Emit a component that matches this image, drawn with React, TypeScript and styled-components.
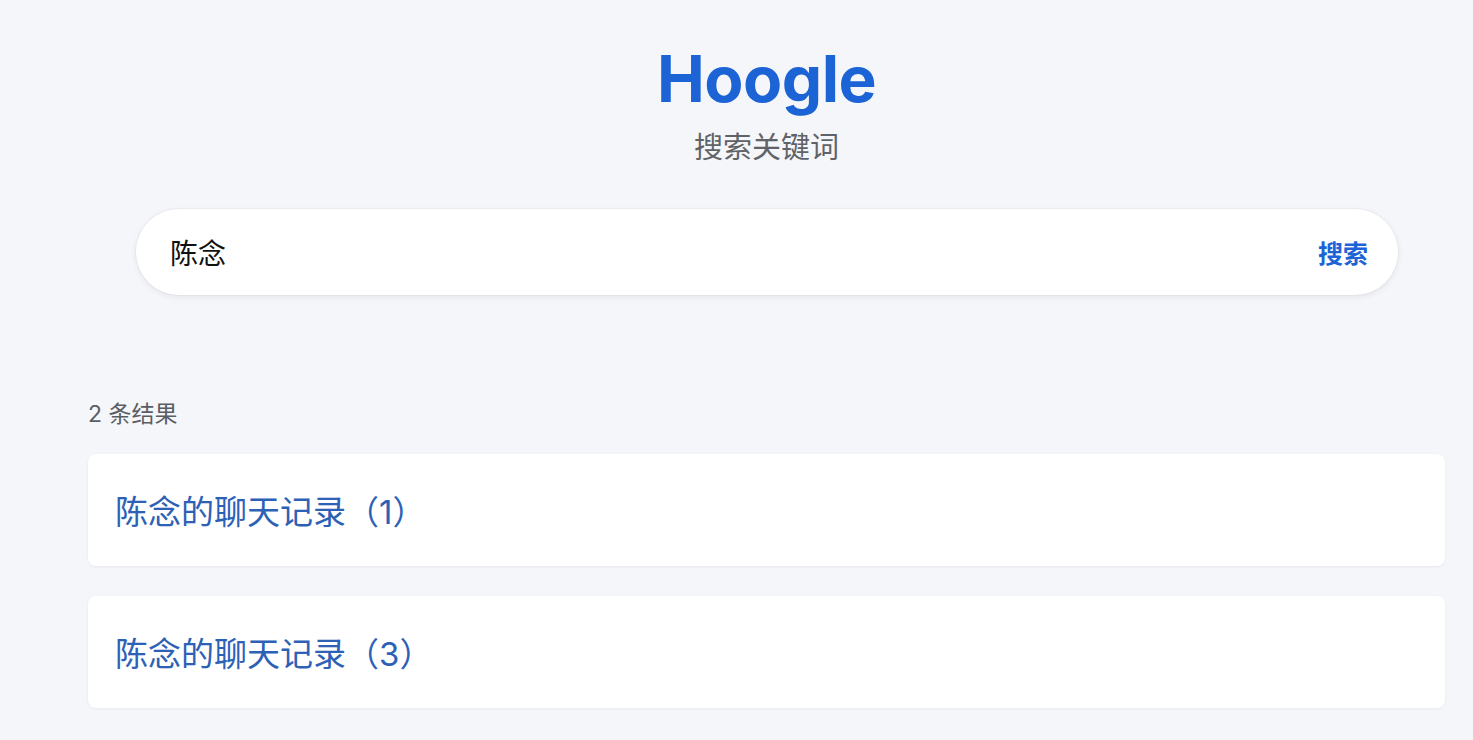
import React, { useState } from "react";
import styled, { createGlobalStyle } from "styled-components";

const GlobalStyle = createGlobalStyle`
    html, body {
        margin: 0;
        padding: 0;
        background: #f5f6f9;
    }
    body {
        font-family: Inter, "Noto Sans CJK SC", sans-serif;
    }
    * {
        box-sizing: border-box;
    }
`;

const Page = styled.main`
    width: 1357px;
    margin-left: 88px;
    padding-top: 40px;
    min-height: 740px;
`;

const Header = styled.header`
    display: flex;
    flex-direction: column;
    align-items: center;
`;

const Title = styled.h1`
    margin: 0;
    font-size: 64px;
    line-height: 78px;
    font-weight: 700;
    color: #1c63d6;
    letter-spacing: -0.5px;
`;

const Subtitle = styled.p`
    margin: 10px 0 0;
    font-size: 29px;
    line-height: 40px;
    color: #5f6368;
`;

const SearchWrap = styled.form`
    margin: 41px 47px 0 48px;
    height: 86px;
    display: flex;
    align-items: center;
    padding: 0 30px 0 34px;
    background: #fff;
    border-radius: 43px;
    box-shadow: 0 2px 6px rgba(30, 40, 60, 0.08), 0 0 0 1px rgba(30, 40, 60, 0.03);
`;

const SearchInput = styled.input`
    flex: 1;
    border: 0;
    outline: none;
    background: transparent;
    font-family: inherit;
    font-size: 28px;
    color: #111;
    padding: 0;
`;

const SearchButton = styled.button`
    border: 0;
    background: transparent;
    padding: 0;
    font-family: inherit;
    font-size: 25px;
    font-weight: 700;
    color: #1c63d6;
    cursor: pointer;
`;

const ResultCount = styled.div`
    margin-top: 104px;
    font-size: 23px;
    line-height: 30px;
    color: #5a5d63;
`;

const ResultList = styled.ul`
    list-style: none;
    margin: 25px 0 0;
    padding: 0;
    display: flex;
    flex-direction: column;
    gap: 30px;
`;

const ResultItem = styled.li`
    height: 112px;
    display: flex;
    align-items: center;
    padding: 0 27px;
    background: #fff;
    border-radius: 8px;
    box-shadow: 0 1px 3px rgba(30, 40, 60, 0.06);
    cursor: pointer;
`;

const ResultLink = styled.span`
    font-size: 33px;
    color: #2d61b6;
`;

const results = ["陈念的聊天记录（1）", "陈念的聊天记录（3）"];

function App() {
    const [query, setQuery] = useState("陈念");

    return (
        <>
            <GlobalStyle />
            <Page>
                <Header>
                    <Title>Hoogle</Title>
                    <Subtitle>搜索关键词</Subtitle>
                </Header>

                <SearchWrap onSubmit={e => e.preventDefault()}>
                    <SearchInput value={query} onChange={e => setQuery(e.target.value)} />
                    <SearchButton>搜索</SearchButton>
                </SearchWrap>

                <ResultCount>{results.length} 条结果</ResultCount>

                <ResultList>
                    {results.map(item => (
                        <ResultItem key={item}>
                            <ResultLink>{item}</ResultLink>
                        </ResultItem>
                    ))}
                </ResultList>
            </Page>
        </>
    );
}

export default App;
